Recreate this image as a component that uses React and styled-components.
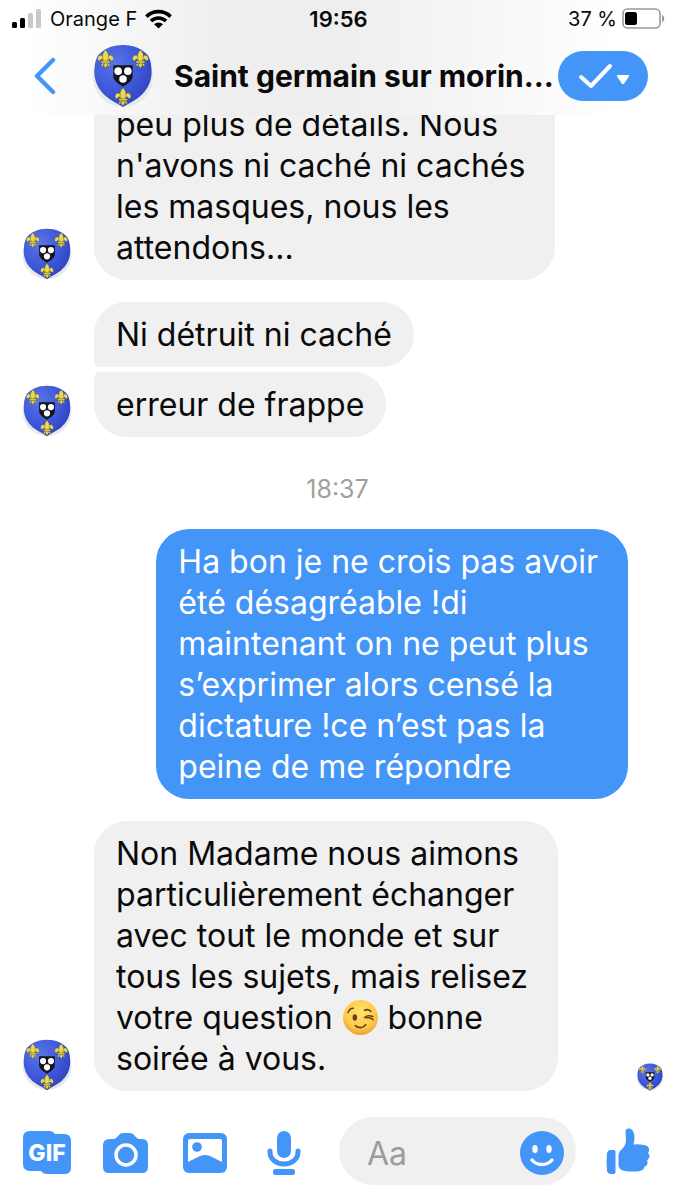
import styled, { createGlobalStyle } from 'styled-components';

const GlobalStyle = createGlobalStyle`
  * {
    box-sizing: border-box;
  }

  body {
    margin: 0;
    background: #fff;
    color: #0a0a0a;
    font-family: Inter, 'Liberation Sans', sans-serif;
  }

  button {
    display: flex;
    flex: none;
    align-items: center;
    justify-content: center;
    padding: 0;
    border: 0;
    background: none;
    color: #4495f8;
    cursor: pointer;
  }
`;

const Page = styled.div`
  display: flex;
  flex-direction: column;
  height: 100vh;
`;

const Header = styled.header`
  flex: none;
  background: linear-gradient(90deg, #fff 4%, #eee 34%, #eee 50%, #fff 92%);
`;

const StatusBar = styled.div`
  display: grid;
  grid-template-columns: 1fr auto 1fr;
  align-items: center;
  height: 37px;
  padding: 0 10px 0 12px;
  font-size: 20px;
`;

const StatusGroup = styled.div`
  display: flex;
  align-items: center;
  justify-content: ${(props) => (props.$end ? 'flex-end' : 'flex-start')};
  gap: ${(props) => (props.$end ? 5 : 8)}px;
`;

const Clock = styled.time`
  font-size: 22px;
  font-weight: 600;
`;

const NavBar = styled.div`
  display: flex;
  align-items: center;
  height: 78px;
  padding: 0 27px 0 31px;
`;

const BackButton = styled.button`
  width: 28px;
  height: 44px;
`;

const HeaderAvatar = styled.span`
  display: flex;
  margin: 0 19px 0 32px;
`;

const Title = styled.h1`
  flex: 1;
  min-width: 0;
  margin: 0;
  font-size: 30px;
  font-weight: 700;
  line-height: 36px;
  white-space: nowrap;
`;

const MarkButton = styled.button`
  width: 90px;
  height: 50px;
  border-radius: 25px;
  && {
    background: #4495f8;
    color: #fff;
  }
`;

const Thread = styled.main`
  flex: 1;
  display: flex;
  flex-direction: column;
  justify-content: flex-end;
  min-height: 0;
  overflow: hidden;
`;

const Row = styled.div`
  display: flex;
  flex: none;
  align-items: flex-end;
  justify-content: ${(props) => (props.$mine ? 'flex-end' : 'flex-start')};
  margin-top: ${(props) => (props.$grouped ? 5 : 22)}px;
  padding-right: ${(props) => (props.$mine ? 47 : 11)}px;
`;

const AvatarSlot = styled.div`
  display: flex;
  flex: none;
  justify-content: center;
  width: 94px;
`;

const SeenSlot = styled.div`
  display: flex;
  margin-left: auto;
`;

const corners = {
  all: '33px',
  cut: '0 0 33px 33px',
  first: '33px 33px 33px 6px',
  last: '6px 33px 33px 33px',
};

const Bubble = styled.p`
  margin: 0;
  padding: 12px ${(props) => (props.$wide ? 30 : 22)}px 12px 22px;
  border-radius: ${(props) => corners[props.$corner || 'all']};
  background: ${(props) => (props.$mine ? '#4495f8' : '#f0f0f0')};
  color: ${(props) => (props.$mine ? '#fff' : '#0a0a0a')};
  font-size: 32px;
  line-height: 41px;
  white-space: pre-line;
`;

const Timestamp = styled.time`
  flex: none;
  padding: 36px 0 2px;
  color: #a0a0a0;
  font-size: 25px;
  line-height: 32px;
  text-align: center;
`;

const Wink = styled.svg`
  width: 37px;
  height: 37px;
  vertical-align: -7px;
`;

const Composer = styled.form`
  display: flex;
  flex: none;
  align-items: center;
  gap: 30px;
  padding: 26px 25px 15px 22px;
`;

const Tools = styled.div`
  display: flex;
  gap: 29px;
  padding-top: 4px;
`;

const ToolButton = styled.button`
  width: 50px;
  height: 50px;
`;

const Field = styled.div`
  display: flex;
  flex: 1;
  align-items: center;
  min-width: 0;
  height: 68px;
  padding: 4px 12px 0 28px;
  border-radius: 34px;
  background: #f0f0f0;
`;

const Input = styled.input`
  flex: 1;
  min-width: 0;
  padding: 0;
  border: 0;
  outline: 0;
  background: none;
  font-family: inherit;
  font-size: 32px;

  &::placeholder {
    color: #9c9c9c;
    opacity: 1;
  }
`;

function Lily({ x, y }) {
  return (
    <g transform={`translate(${x} ${y})`} fill="#ecd94c" stroke="#4d4a3c" strokeWidth=".4">
      <path d="M-1 3C-1-3-6-6-8-1c-1 4 3 4 3.500 1.500C-3 0-3 2-2.500 3ZM1 3C1-3 6-6 8-1c1 4-3 4-3.500 1.500C3 0 3 2 2.500 3Z" />
      <path d="M0-9C-4-5-3.500-1-1.500 3h3C3.500-1 4-5 0-9Z" />
      <path d="M-2 4l-3 3 2 1 2-3ZM2 4l3 3-2 1-2-3ZM-1.500 4h3l.5 3L0 10l-2-3Z" />
      <path d="M-4.500 2.500h9v2h-9Z" />
    </g>
  );
}

function Crest({ size }) {
  return (
    <svg width={size} height={size} viewBox="0 0 64 66" role="img" aria-label="Saint germain sur morin">
      <defs>
        <radialGradient id={`crest${size}`} cx=".35" cy=".3" r=".75">
          <stop offset="0" stopColor="#5a74e6" />
          <stop offset=".6" stopColor="#3d57da" />
          <stop offset="1" stopColor="#2f43bb" />
        </radialGradient>
      </defs>
      <circle cx="32" cy="34" r="31" fill="#e6e8ec" />
      <path
        d="M32 1C43 1 52 5 58 12c3 5 3.500 12 3.500 18C61 42 55 50 47 56 42 60 36 62 32 65 28 62 22 60 17 56 9 50 3 42 2.500 30 2.500 24 3 17 6 12 12 5 21 1 32 1Z"
        fill={`url(#crest${size})`}
      />
      <Lily x={14} y={15} />
      <Lily x={50} y={15} />
      <Lily x={32} y={54} />
      <path d="M22 22h20v11c0 5-5 8-10 11-5-3-10-6-10-11Z" fill="#15151b" />
      <g fill="#fff">
        <circle cx="27" cy="28" r="3.9" />
        <circle cx="37" cy="28" r="3.9" />
        <circle cx="32" cy="36" r="3.9" />
      </g>
    </svg>
  );
}

function WinkEmoji() {
  return (
    <Wink viewBox="0 0 36 36" role="img" aria-label="clin d'œil">
      <defs>
        <radialGradient id="wink" cx=".5" cy=".35" r=".65">
          <stop offset="0" stopColor="#ffe46b" />
          <stop offset=".7" stopColor="#fdca4a" />
          <stop offset="1" stopColor="#eba02e" />
        </radialGradient>
      </defs>
      <circle cx="18" cy="18" r="17" fill="url(#wink)" />
      <ellipse cx="12.5" cy="18" rx="2.2" ry="3.1" fill="#6b3f14" />
      <g fill="none" stroke="#6b3f14" strokeWidth="1.6" strokeLinecap="round" strokeLinejoin="round">
        <path d="M6 13c1-3 3-4 5-4M22 11c2-1 4-1 6 1M22 18c2-2 5-2 8-1M23 18c3 0 5 0 7 2M13 26c4 3 8 2 10-1" />
      </g>
    </Wink>
  );
}

function App() {
  return (
    <Page>
      <GlobalStyle />
      <Header>
        <StatusBar>
          <StatusGroup>
            <svg width="30" height="20" viewBox="0 0 30 20" aria-hidden="true">
              <rect x="0" y="13" width="5" height="6" rx="1.5" />
              <rect x="8" y="9" width="5" height="10" rx="1.5" />
              <rect x="16" y="4" width="5" height="15" rx="1.5" fill="#c8c8c8" />
              <rect x="24" y="0" width="5" height="19" rx="1.5" fill="#c8c8c8" />
            </svg>
            Orange F
            <svg width="27" height="20" viewBox="0 0 27 20" aria-hidden="true">
              <g fill="none" stroke="#000" strokeWidth="3.6">
                <path d="M1.4 7.6a17.2 17.2 0 0 1 24.2 0M6 12a10.8 10.8 0 0 1 15 0" />
              </g>
              <path d="M13.5 19.5 9 15.2a6.5 6.5 0 0 1 9 0Z" />
            </svg>
          </StatusGroup>
          <Clock>19:56</Clock>
          <StatusGroup $end>
            37 %
            <svg width="43" height="22" viewBox="0 0 43 22" aria-hidden="true">
              <rect x="1" y="1" width="37" height="19" rx="4.5" fill="#fff" stroke="#999" strokeWidth="1.6" />
              <rect x="3" y="4" width="12" height="13" rx="2.5" />
              <path d="M40 7c3 1 3 6 0 7Z" fill="#999" />
            </svg>
          </StatusGroup>
        </StatusBar>
        <NavBar>
          <BackButton type="button" aria-label="Retour">
            <svg width="24" height="38" viewBox="0 0 24 38" fill="none" stroke="currentColor" strokeWidth="4.4" strokeLinecap="round" strokeLinejoin="round">
              <path d="M20 3 4 19l16 16" />
            </svg>
          </BackButton>
          <HeaderAvatar>
            <Crest size={64} />
          </HeaderAvatar>
          <Title>Saint germain sur morin...</Title>
          <MarkButton type="button" aria-label="Options">
            <svg width="51" height="26" viewBox="0 0 51 26">
              <path d="m3 14 10 9L32 3" fill="none" stroke="currentColor" strokeWidth="4" strokeLinecap="round" strokeLinejoin="round" />
              <path d="M40 12h10q2 0 .6 2l-4.400 6.600q-1.200 1.400-2.400 0L39.400 14Q38 12 40 12Z" fill="currentColor" />
            </svg>
          </MarkButton>
        </NavBar>
      </Header>

      <Thread>
        <Row>
          <AvatarSlot><Crest size={52} /></AvatarSlot>
          <Bubble $corner="cut" $wide>
            {"peu plus de détails. Nous\nn'avons ni caché ni cachés\nles masques, nous les\nattendons..."}
          </Bubble>
        </Row>
        <Row>
          <AvatarSlot />
          <Bubble $corner="first">Ni détruit ni caché</Bubble>
        </Row>
        <Row $grouped>
          <AvatarSlot><Crest size={52} /></AvatarSlot>
          <Bubble $corner="last">erreur de frappe</Bubble>
        </Row>
        <Timestamp>18:37</Timestamp>
        <Row $mine>
          <Bubble $mine $wide>
            {'Ha bon je ne crois pas avoir\nété désagréable !di\nmaintenant on ne peut plus\ns’exprimer alors censé la\ndictature !ce n’est pas la\npeine de me répondre'}
          </Bubble>
        </Row>
        <Row>
          <AvatarSlot><Crest size={52} /></AvatarSlot>
          <Bubble $wide>
            {'Non Madame nous aimons\nparticulièrement échanger\navec tout le monde et sur\ntous les sujets, mais relisez\nvotre question '}
            <WinkEmoji />
            {' bonne\nsoirée à vous.'}
          </Bubble>
          <SeenSlot><Crest size={28} /></SeenSlot>
        </Row>
      </Thread>

      <Composer>
        <Tools>
          <ToolButton type="button" aria-label="GIF">
            <svg width="48" height="44" viewBox="0 0 48 44">
              <path d="M7 0h20q3 0 5 3h9q7 0 7 7v27q0 6-7 6H24q-4 0-6-3H7q-7 0-7-7V7q0-7 7-7Z" fill="currentColor" />
              <text x="24" y="30" textAnchor="middle" fill="#fff" fontFamily="Inter, sans-serif" fontSize="23" fontWeight="800">GIF</text>
            </svg>
          </ToolButton>
          <ToolButton type="button" aria-label="Appareil photo">
            <svg width="46" height="40" viewBox="0 0 46 40">
              <path d="M7 6h4q2 0 4-3t5-3h7q3 0 5 3t4 3h3q6 0 6 6v22q0 6-6 6H6q-6 0-6-6V12q0-6 7-6Z" fill="currentColor" />
              <circle cx="23" cy="22" r="10" fill="none" stroke="#fff" strokeWidth="3.5" />
            </svg>
          </ToolButton>
          <ToolButton type="button" aria-label="Galerie">
            <svg width="44" height="40" viewBox="0 0 44 40">
              <rect width="44" height="40" rx="6" fill="currentColor" />
              <path d="M5 8q0-2 2-2h30q2 0 2 2v21l-12-6q-5-2-10 0L5 29Z" fill="#fff" />
              <circle cx="14" cy="14" r="4.8" fill="currentColor" />
            </svg>
          </ToolButton>
          <ToolButton type="button" aria-label="Micro">
            <svg width="34" height="44" viewBox="0 0 34 44">
              <rect x="10" width="14" height="27" rx="7" fill="currentColor" />
              <path d="M3 20v1c0 7 6 12 14 12s14-5 14-12v-1" fill="none" stroke="currentColor" strokeWidth="5" strokeLinecap="round" />
              <rect x="6" y="38" width="22" height="6" rx="2" fill="currentColor" />
            </svg>
          </ToolButton>
        </Tools>
        <Field>
          <Input type="text" placeholder="Aa" aria-label="Message" />
          <button type="button" aria-label="Emoji">
            <svg width="44" height="44" viewBox="0 0 44 44">
              <circle cx="22" cy="22" r="22" fill="currentColor" />
              <ellipse cx="15" cy="18" rx="2.7" ry="4" fill="#fff" />
              <ellipse cx="29" cy="18" rx="2.7" ry="4" fill="#fff" />
              <path d="M12 29c5 6 15 6 20 0" fill="none" stroke="#fff" strokeWidth="3.4" strokeLinecap="round" />
            </svg>
          </button>
        </Field>
        <button type="button" aria-label="J'aime">
          <svg width="44" height="46" viewBox="0 0 44 46" fill="currentColor">
            <path d="M4 22h4q1.500 0 1.500 2v20q0 2-1.500 2H4q-2 0-3-3-1-8 0-18 1-3 3-3Z" />
            <path d="M12.500 28q0-4 3.500-7 4-4 4-9l-.5-8q0-4 3.500-3.500c4 .5 5.500 4.500 5.500 9.500q0 3-1 6.500 5.500-.5 10.500.5 5.500 1 5 5 0 2-1 3 2.500 3 1 5-1 2-2 2 1.500 4-1 6l-1.500.5q-.5 3.500-4.500 4.500-7 1-15 0-6.500-1-6.500-6Z" />
          </svg>
        </button>
      </Composer>
    </Page>
  );
}

export default App;
